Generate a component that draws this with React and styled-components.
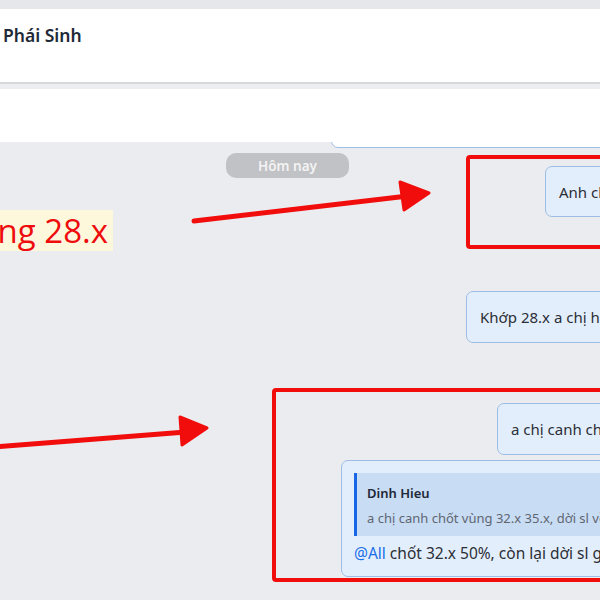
import React from "react";
import styled, { createGlobalStyle } from "styled-components";

const Global = createGlobalStyle`
  html, body { margin: 0; padding: 0; background: #e6e8eb; }
  body { font-family: "Noto Sans", "Open Sans", sans-serif; }
`;

const Page = styled.div`
  position: relative;
  width: 600px;
  height: 600px;
  overflow: hidden;
  display: flex;
  flex-direction: column;
  background: #e6e8eb;
`;

const TopStrip = styled.div`
  height: 9px;
  flex: none;
  background: #e5e7ea;
`;

const Header = styled.header`
  flex: none;
  height: 75px;
  background: #ffffff;
  border-bottom: 2px solid #d5d7db;
  display: flex;
  align-items: flex-start;
  padding: 14px 0 0 3px;
  box-sizing: border-box;
`;

const Title = styled.h1`
  margin: 0;
  font-family: "Noto Sans", "Open Sans", sans-serif;
  font-size: 17.5px;
  font-weight: 600;
  color: #1f2937;
  line-height: 24px;
`;

const Spacer = styled.div`
  flex: none;
  height: 5px;
  background: #eceef1;
`;

const Band = styled.div`
  flex: none;
  height: 53px;
  background: #ffffff;
  position: relative;
  z-index: 2;
`;

const Chat = styled.main`
  position: relative;
  flex: 1;
  background: #ebecef;
  overflow: hidden;
`;

const Column = styled.div`
  width: 900px;
  display: flex;
  flex-direction: column;
  align-items: flex-end;
`;

const Bubble = styled.div`
  box-sizing: border-box;
  width: ${(p) => p.$w}px;
  margin-top: ${(p) => p.$gap}px;
  background: ${(p) => (p.$plain ? "#ffffff" : "#e3eefc")};
  border: 1px solid #9ebde4;
  border-radius: 7px;
  padding: ${(p) => (p.$reply ? "12px 12px 13px" : "0 13px")};
  height: ${(p) => (p.$h ? p.$h + "px" : "auto")};
  display: flex;
  flex-direction: column;
  justify-content: center;
  font-size: 15px;
  line-height: 20px;
  color: #2b2f36;
  white-space: nowrap;
  overflow: hidden;
`;

const Quote = styled.div`
  background: #c8dcf4;
  border-left: 3px solid #1766e6;
  padding: 11px 10px 9px 10px;
  display: flex;
  flex-direction: column;
  gap: 7px;
  margin-bottom: 7px;
`;

const QuoteName = styled.div`
  font-size: 13px;
  line-height: 18px;
  font-weight: 600;
  color: #1f2937;
`;

const QuoteText = styled.div`
  font-size: 13px;
  line-height: 18px;
  color: #5f6672;
`;

const ReplyText = styled.div`
  font-size: 15.5px;
  line-height: 20px;
  color: #2b2f36;
`;

const Mention = styled.span`
  color: #1a6ee6;
`;

const DatePill = styled.div`
  position: absolute;
  top: 11px;
  left: 226px;
  width: 123px;
  height: 25px;
  border-radius: 10px;
  background: #c1c2c5;
  color: #f3f3f3;
  font-size: 13.5px;
  font-weight: 600;
  display: flex;
  align-items: center;
  justify-content: center;
`;

/* annotation overlay */
const Overlay = styled.div`
  position: absolute;
  inset: 0;
  pointer-events: none;
  z-index: 5;
`;

const RedBox = styled.div`
  position: absolute;
  left: ${(p) => p.$x}px;
  top: ${(p) => p.$y}px;
  width: ${(p) => p.$w}px;
  height: ${(p) => p.$h}px;
  border: 4px solid #f20d0d;
  border-radius: 4px;
  box-sizing: border-box;
`;

const Note = styled.div`
  position: absolute;
  right: 487px;
  top: 210px;
  height: 41px;
  padding: 0 5px 0 0;
  background: #fdf8dc;
  color: #ee0c0c;
  font-family: "Open Sans", "Noto Sans", sans-serif;
  font-size: 33px;
  line-height: 41px;
  white-space: nowrap;
`;

const Arrows = styled.svg`
  position: absolute;
  left: 0;
  top: 0;
`;

export default function App() {
  return (
    <>
      <Global />
      <Page>
        <TopStrip />
        <Header>
          <Title>Phái Sinh</Title>
        </Header>
        <Spacer />
        <Band />
        <Chat>
          <Column>
            <Bubble $plain $w={569} $gap={-46} $h={52}>
              Mọi người chú ý quản trị rủi ro
            </Bubble>
            <Bubble $w={355} $gap={18} $h={51}>
              Anh chị hold lệnh chờ tín hiệu nhé
            </Bubble>
            <Bubble $w={434} $gap={74} $h={52}>
              Khớp 28.x a chị hold tiếp nhé
            </Bubble>
            <Bubble $w={403} $gap={60} $h={52}>
              a chị canh chốt vùng 32.x 35.x
            </Bubble>
            <Bubble $reply $w={559} $gap={5}>
              <Quote>
                <QuoteName>Dinh Hieu</QuoteName>
                <QuoteText>a chị canh chốt vùng 32.x 35.x, dời sl về hoà vốn</QuoteText>
              </Quote>
              <ReplyText>
                <Mention>@All</Mention> chốt 32.x 50%, còn lại dời sl giữ tiếp
              </ReplyText>
            </Bubble>
          </Column>
          <DatePill>Hôm nay</DatePill>
        </Chat>
        <Overlay>
          <RedBox $x={466} $y={155} $w={160} $h={94} />
          <RedBox $x={272} $y={388} $w={360} $h={194} />
          <Note>Mua vùng 28.x</Note>
          <Arrows width="600" height="600" viewBox="0 0 600 600">
            <line x1="194" y1="221" x2="408" y2="196" stroke="#f20d0d" strokeWidth="5" strokeLinecap="round" />
            <polygon points="400,182 429,193 404,210" fill="#f20d0d" stroke="#f20d0d" strokeWidth="3" strokeLinejoin="round" />
            <line x1="-5" y1="447" x2="186" y2="432" stroke="#f20d0d" strokeWidth="5" strokeLinecap="round" />
            <polygon points="180,417 207,428 182,445" fill="#f20d0d" stroke="#f20d0d" strokeWidth="3" strokeLinejoin="round" />
          </Arrows>
        </Overlay>
      </Page>
    </>
  );
}
